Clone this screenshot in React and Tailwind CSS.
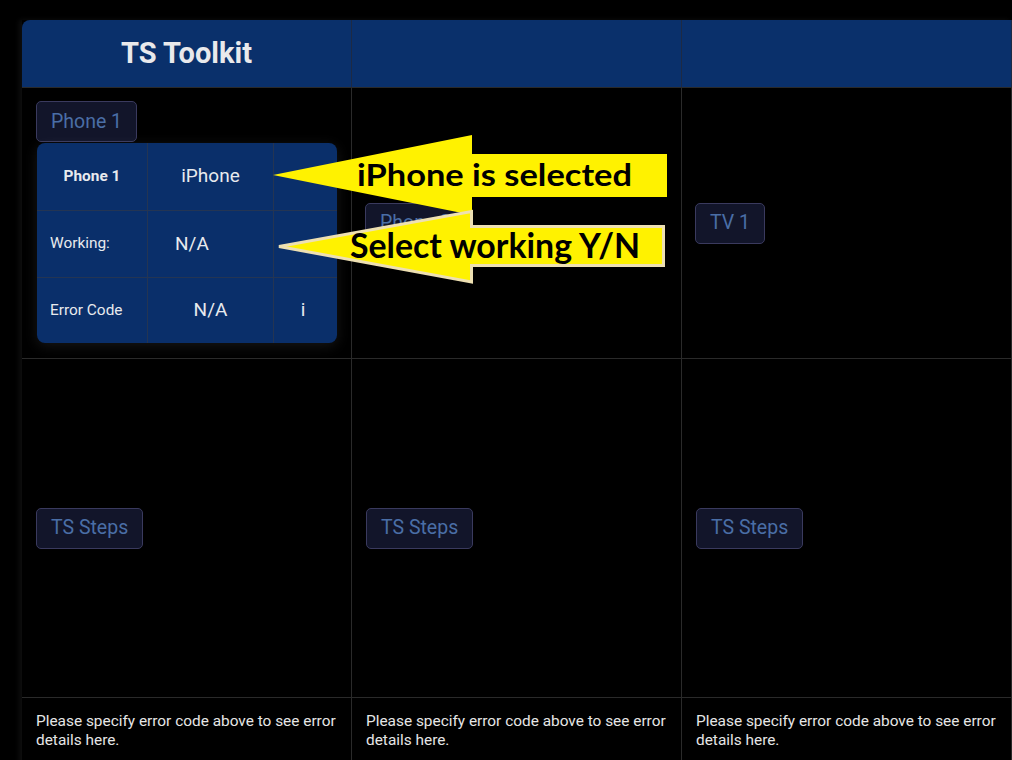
import React from "react";

const devices = ["Phone 1", "Phone 2", "TV 1"];

function DarkButton({ label }) {
  return (
    <button className="h-[41px] px-[14px] rounded-[5px] border border-[#3a3a5e] bg-[#12152a] text-[19.5px] text-[#4a6ea6] leading-none">
      {label}
    </button>
  );
}

function DevicePopup() {
  // selection table shown under the first device button
  return (
    <div className="ml-px w-[300px] h-[200px] rounded-lg bg-[#0a2f6a] text-[#e8eaee] shadow-[0_3px_14px_rgba(255,255,255,0.09)] grid grid-cols-[111px_126px_63px] grid-rows-[68px_67px_65px] overflow-hidden">
      <div className="border-r border-b border-[#243553] flex items-center justify-center text-[15.4px] font-bold">
        Phone 1
      </div>
      <div className="border-r border-b border-[#243553] flex items-center justify-center text-[19px]">
        iPhone
      </div>
      <div className="border-b border-[#243553]"></div>

      <div className="border-r border-b border-[#243553] flex items-center pl-[13px] text-[15.4px]">
        Working:
      </div>
      <div className="border-r border-b border-[#243553] flex items-center pl-[27px] text-[19px]">
        N/A
      </div>
      <div className="border-b border-[#243553]"></div>

      <div className="border-r border-[#243553] flex items-center pl-[13px] text-[15.4px]">
        Error Code
      </div>
      <div className="border-r border-[#243553] flex items-center justify-center text-[19px]">
        N/A
      </div>
      <div className="flex items-center justify-center pr-[5px] text-[19px]">i</div>
    </div>
  );
}

function Callouts() {
  return (
    <svg
      className="absolute left-0 top-0 pointer-events-none"
      width="1012"
      height="760"
      viewBox="0 0 1012 760"
    >
      <polygon
        points="273,175 472,135 472,154 667,154 667,197 472,197 472,215"
        fill="#fff200"
      />
      <text
        x="357"
        y="186"
        fontFamily="Lato, 'Open Sans', sans-serif"
        fontWeight="700"
        fontSize="31"
        textLength="275"
        lengthAdjust="spacingAndGlyphs"
        fill="#000"
      >
        iPhone is selected
      </text>
      <polygon
        points="279,246.5 471.5,211.5 471.5,226.5 663.5,226.5 663.5,265.5 471.5,265.5 471.5,282"
        fill="#fff200"
        stroke="#eee0b2"
        strokeWidth="3"
      />
      <text
        x="350"
        y="258"
        fontFamily="Lato, 'Open Sans', sans-serif"
        fontWeight="700"
        fontSize="35"
        textLength="290"
        lengthAdjust="spacingAndGlyphs"
        fill="#000"
      >
        Select working Y/N
      </text>
    </svg>
  );
}

export default function App() {
  return (
    <div className="relative min-h-screen bg-black pt-5 pl-[22px] overflow-hidden font-['Roboto',sans-serif]">
      <div className="w-[990px] shadow-[-3px_0_5px_rgba(255,255,255,0.06)]">
        {/* header */}
        <div className="grid grid-cols-3 h-[68px] bg-[#0a306b] rounded-tl-lg border-b border-[#2a2a2a]">
          <div className="border-r border-[#1d2a44] flex items-center justify-center text-[29px] font-bold text-[#e9e9ec]">
            TS Toolkit
          </div>
          <div className="border-r border-[#1d2a44]"></div>
          <div className="border-r border-[#1d2a44]"></div>
        </div>

        {/* device row */}
        <div className="grid grid-cols-3 h-[271px] border-b border-[#2a2a2a]">
          <div className="border-r border-[#2a2a2a] px-[14px] pt-[13px] flex flex-col items-start gap-px">
            <DarkButton label={devices[0]} />
            <DevicePopup />
          </div>
          {devices.slice(1).map((d) => (
            <div
              key={d}
              className="border-r border-[#2a2a2a] px-[13px] flex flex-col justify-center items-start"
            >
              <DarkButton label={d} />
            </div>
          ))}
        </div>

        {/* steps row */}
        <div className="grid grid-cols-3 h-[339px] border-b border-[#2a2a2a]">
          {devices.map((d) => (
            <div
              key={d}
              className="border-r border-[#2a2a2a] px-[14px] flex flex-col justify-center items-start"
            >
              <DarkButton label="TS Steps" />
            </div>
          ))}
        </div>

        {/* error details row */}
        <div className="grid grid-cols-3 h-[80px]">
          {devices.map((d) => (
            <div
              key={d}
              className="border-r border-[#2a2a2a] p-[14px] text-[15.4px] leading-[19px] text-[#e6e6e6]"
            >
              Please specify error code above to see error details here.
            </div>
          ))}
        </div>
      </div>

      <Callouts />
    </div>
  );
}
